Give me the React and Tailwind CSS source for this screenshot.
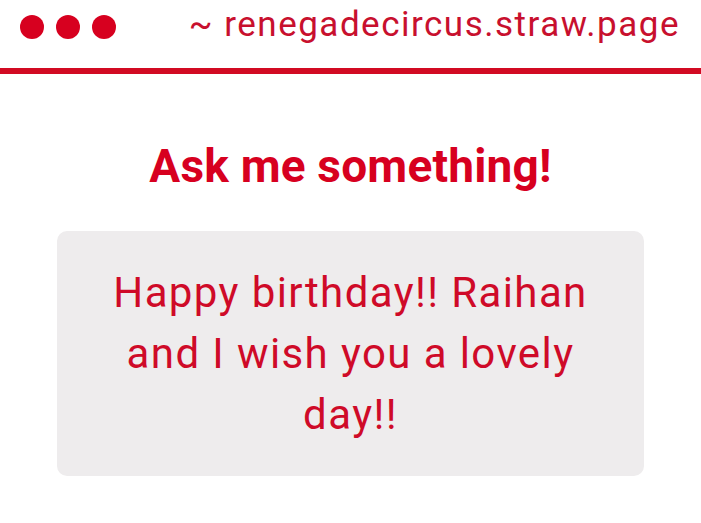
export default function App() {
  return (
    <div className="w-[701px] h-[523px] bg-white text-[#d7001f] font-['Roboto',sans-serif] overflow-hidden">
      {/* Top bar */}
      <div className="h-[68px] pb-[14px] flex items-center justify-between pl-[20px] pr-[21px]">
        <div className="flex gap-[12px]">
          <span className="w-[24px] h-[24px] rounded-full bg-[#d7001f]" />
          <span className="w-[24px] h-[24px] rounded-full bg-[#d7001f]" />
          <span className="w-[24px] h-[24px] rounded-full bg-[#d7001f]" />
        </div>
        <div className="text-[35px] leading-none tracking-[1.5px] text-[#c8102e] mb-[5px]">~ renegadecircus.straw.page</div>
      </div>
      <div className="h-[6px] bg-[#d20a23]" />

      {/* Content */}
      <div className="flex flex-col items-center pt-[69px]">
        <h1 className="text-[46px] font-bold leading-none tracking-[0.2px]">Ask me something!</h1>
        <div className="mt-[42px] w-[587px] h-[245px] rounded-[10px] bg-[#eeeced] flex items-center justify-center px-[48px]">
          <p className="text-[42px] leading-[61px] tracking-[1.4px] text-center text-[#cf0a28]">
            Happy birthday!! Raihan and I wish you a lovely day!!
          </p>
        </div>
      </div>
    </div>
  );
}
